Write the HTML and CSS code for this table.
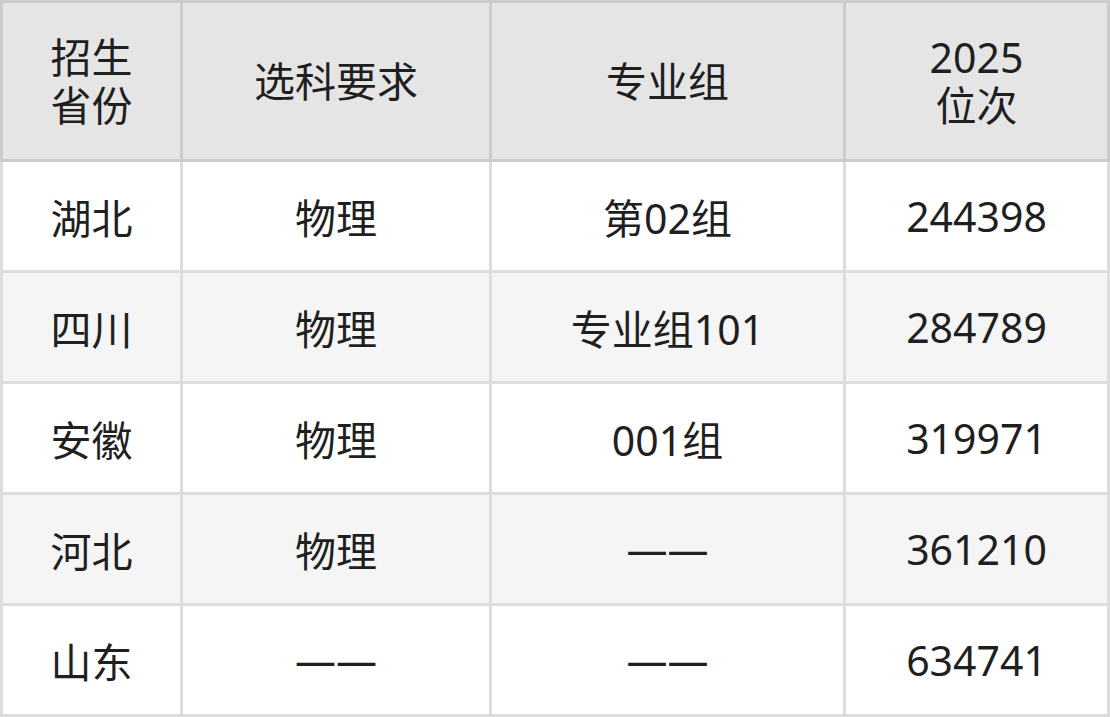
FILE: index.html
```html
<!DOCTYPE html>
<html lang="zh-CN">
<head>
<meta charset="utf-8">
<title>招生位次</title>
<link rel="stylesheet" href="styles.css">
</head>
<body>
<div class="table">
  <div class="head">
    <div class="cell">招生<br>省份</div>
    <div class="cell">选科要求</div>
    <div class="cell">专业组</div>
    <div class="cell">2025<br>位次</div>
  </div>
  <div class="body">
    <div class="cell">湖北</div>
    <div class="cell">物理</div>
    <div class="cell">第02组</div>
    <div class="cell">244398</div>

    <div class="cell alt">四川</div>
    <div class="cell alt">物理</div>
    <div class="cell alt">专业组101</div>
    <div class="cell alt">284789</div>

    <div class="cell">安徽</div>
    <div class="cell">物理</div>
    <div class="cell">001组</div>
    <div class="cell">319971</div>

    <div class="cell alt">河北</div>
    <div class="cell alt">物理</div>
    <div class="cell alt">——</div>
    <div class="cell alt">361210</div>

    <div class="cell">山东</div>
    <div class="cell">——</div>
    <div class="cell">——</div>
    <div class="cell">634741</div>
  </div>
</div>
</body>
</html>
```

FILE: styles.css
```css
html, body {
  margin: 0;
  padding: 0;
  background: #ffffff;
}

.table {
  width: 1110px;
  font-family: "Noto Sans", "Noto Sans CJK SC", sans-serif;
  font-size: 41px;
  color: #1f1f1f;
}

.head,
.body {
  display: grid;
  grid-template-columns: 177px 306px 351px 261px;
  column-gap: 3px;
}

.head {
  background: #cccccc;
  padding: 3px;
  grid-template-rows: 156px;
}

.body {
  background: #dddddd;
  padding: 0 3px 3px 3px;
  grid-auto-rows: 108px;
  row-gap: 3px;
}

.cell {
  display: flex;
  align-items: center;
  justify-content: center;
  text-align: center;
  background: #ffffff;
}

.head .cell {
  background: #e5e5e5;
  line-height: 48px;
}

.cell.alt {
  background: #f5f5f5;
}
```
